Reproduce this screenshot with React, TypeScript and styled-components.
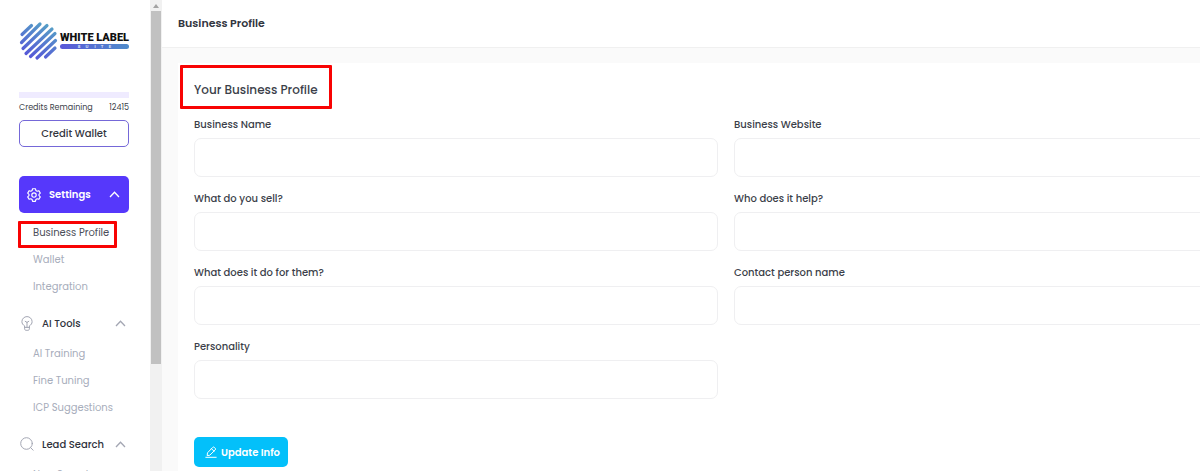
import React, { useId } from "react";
import styled, { createGlobalStyle, css } from "styled-components";

const GlobalStyle = createGlobalStyle`
  *, *::before, *::after { box-sizing: border-box; }
  body {
    margin: 0;
    background: #fafafa;
    color: #3c3f4a;
    font-family: Poppins, Inter, sans-serif;
    font-size: 10px;
    line-height: 15px;
  }
  button, input { font: inherit; color: inherit; }
`;

const Shell = styled.div`
  display: flex;
  height: 100vh;
  overflow: hidden;
`;

const Sidebar = styled.aside`
  flex: none;
  width: 150px;
  height: 100%;
  padding: 21px 21px 0 19px;
  overflow: hidden;
  background: #fff;
`;

const Logo = styled.a`
  display: block;
  height: 39px;
  svg { display: block; overflow: visible; }
`;

const CreditBar = styled.div`
  height: 6px;
  margin-top: 32px;
  background: #efebff;
`;

const CreditLine = styled.div`
  display: flex;
  justify-content: space-between;
  margin-top: 2px;
  font-size: 8px;
`;

const WalletButton = styled.button`
  display: block;
  width: 100%;
  height: 27px;
  margin-top: 5px;
  padding: 0;
  border: 1px solid #7568d8;
  border-radius: 5px;
  background: #fff;
  font-weight: 500;
  color: #33353e;
`;

const Nav = styled.nav`
  display: flex;
  flex-direction: column;
  gap: 12px;
  margin-top: 29px;
`;

const GroupToggle = styled.button<{ $active?: boolean }>`
  display: flex;
  align-items: center;
  gap: 8px;
  width: 100%;
  height: 22px;
  padding: 0 3px 0 1px;
  border: 0;
  background: none;
  color: #2f323c;
  font-weight: 500;
  text-align: left;
  svg { flex: none; color: #a3a6b3; }
  span { flex: 1; }
  ${(p) =>
    p.$active &&
    css`
      height: 37px;
      padding: 0 9px 0 8px;
      border-radius: 5px;
      background: #5638fb;
      color: #fff;
      font-weight: 600;
      svg { color: #fff; }
    `}
`;

const SubList = styled.ul`
  margin: 6px 0 0;
  padding: 0 0 0 14px;
  list-style: none;
`;

const SubItem = styled.li`
  display: flex;
  align-items: center;
  height: 27px;
`;

const SubLink = styled.a<{ $current?: boolean }>`
  position: relative;
  color: ${(p) => (p.$current ? "#4b4e59" : "#a7adbb")};
  text-decoration: none;
  white-space: nowrap;
`;

const Marker = styled.i<{ $inset: string }>`
  position: absolute;
  inset: ${(p) => p.$inset};
  border: 3px solid #f80303;
  border-radius: 1px;
  pointer-events: none;
`;

const ScrollTrack = styled.div`
  display: flex;
  flex-direction: column;
  flex: none;
  width: 12px;
  height: 100%;
  padding: 0 1px;
  background: #f1f1f1;
`;

const ScrollArrow = styled.div`
  display: grid;
  place-items: center;
  height: 11px;
`;

const ScrollThumb = styled.div`
  height: 75%;
  background: #c1c1c1;
`;

const Main = styled.main`
  flex: 1;
  min-width: 0;
  overflow: hidden;
`;

const TopBar = styled.header`
  display: flex;
  align-items: center;
  height: 48px;
  padding: 0 16px;
  border-bottom: 1px solid #f0f0f0;
  background: #fff;
`;

const PageTitle = styled.h1`
  margin: 0;
  font-size: 11px;
  font-weight: 600;
  color: #33363f;
`;

const Card = styled.form`
  min-width: 1096px;
  min-height: calc(100vh - 63px);
  margin: 15px 16px 0;
  padding: 19px 16px 4px;
  background: #fff;
`;

const CardTitle = styled.h2`
  position: relative;
  width: fit-content;
  margin: 0 0 19px;
  font-size: 12px;
  line-height: 16px;
  font-weight: 500;
`;

const FieldGrid = styled.div`
  display: grid;
  grid-template-columns: 1fr 1fr;
  gap: 14px 16px;
`;

const FieldBox = styled.div`
  display: flex;
  flex-direction: column;
  gap: 6px;
  label { font-weight: 500; }
`;

const TextInput = styled.input`
  width: 100%;
  height: 39px;
  padding: 0 12px;
  border: 1px solid #efeff1;
  border-radius: 7px;
  outline: none;
  background: #fff;
`;

const SubmitButton = styled.button`
  display: flex;
  align-items: center;
  justify-content: center;
  gap: 4px;
  height: 30px;
  margin-top: 38px;
  padding: 0 8px 0 11px;
  border: 0;
  border-radius: 5px;
  background: #03c0fa;
  color: #fff;
  font-weight: 600;
`;

const LogoArt = () => (
  <svg width="110" height="39" viewBox="0 0 110 39" role="img" aria-label="White Label Suite">
    <defs>
      <linearGradient id="ball" gradientUnits="userSpaceOnUse" x1="28" y1="3" x2="12" y2="38">
        <stop offset="0" stopColor="#559fc6" />
        <stop offset="1" stopColor="#5654d8" />
      </linearGradient>
      <linearGradient id="strip" x1="0" x2="1">
        <stop offset="0" stopColor="#5a58d8" />
        <stop offset="1" stopColor="#4f8ccb" />
      </linearGradient>
    </defs>
    <g stroke="url(#ball)" strokeWidth="3.200" strokeLinecap="round">
      <path d="M3 13.500 12.500 4.500M2.500 21.500 21 3M4 27.500 28 4.500M7 32.500 33 8M11.500 35.500 36 12.500M18 37 36.500 19.500M26.500 36 36 27" />
    </g>
    <text x="41" y="20" fontFamily="Roboto, sans-serif" fontWeight="900" fontSize="11" fill="#111">WHITE LABEL</text>
    <rect x="41" y="23" width="69" height="5" rx="2.500" fill="url(#strip)" />
    <g fontFamily="Inter, sans-serif" fontWeight="700" fontSize="4" fill="#dfe6fa" textAnchor="middle">
      <text x="60" y="27">S</text>
      <text x="68" y="27">U</text>
      <text x="76" y="27">I</text>
      <text x="83" y="27">T</text>
      <text x="91" y="27">E</text>
    </g>
  </svg>
);

const Chevron = () => (
  <svg width="11" height="7" viewBox="0 0 11 7" fill="none" stroke="currentColor" strokeWidth="1.300">
    <path d="M1 6 5.500 1.300 10 6" />
  </svg>
);

const GearIcon = () => (
  <svg width="14" height="14" viewBox="0 0 14 14" fill="none" stroke="currentColor" strokeWidth="1.150" strokeLinejoin="round">
    <path d="M5.600.700h2.800l.500 1.800 1.200.700 1.800-.500 1.400 2.400L12 6.400v1.200l1.300 1.300-1.400 2.400-1.800-.500-1.200.700-.500 1.800H5.600l-.500-1.800-1.200-.700-1.800.500L.700 8.900 2 7.600V6.400L.700 5.100l1.400-2.400 1.800.500 1.200-.700z" />
    <circle cx="7" cy="7" r="2.200" />
  </svg>
);

const BulbIcon = () => (
  <svg width="14" height="15" viewBox="0 0 14 15" fill="none" stroke="currentColor" strokeWidth="1" strokeLinejoin="round" strokeLinecap="round">
    <path d="M4.600 11V9.800C3 9 1.900 7.500 1.900 5.700a5.100 5.100 0 0 1 10.200 0c0 1.800-1.100 3.300-2.700 4.100V11zM4.600 11v1.800c0 .900.600 1.500 1.500 1.500h1.800c.900 0 1.500-.600 1.500-1.500V11M7 11V6.400M5.200 5.300 7 6.400l1.800-1.100" />
  </svg>
);

const SearchIcon = () => (
  <svg width="14" height="14" viewBox="0 0 14 14" fill="none" stroke="currentColor" strokeWidth="1" strokeLinecap="round">
    <circle cx="6.500" cy="6.500" r="5.800" />
    <path d="m10.700 10.700 2.400 2.500" />
  </svg>
);

const EditIcon = () => (
  <svg width="12" height="12" viewBox="0 0 12 12" fill="none" stroke="currentColor" strokeWidth="1" strokeLinejoin="round" strokeLinecap="round">
    <path d="M2.200 9.200 2.500 6.800 7.600 1.500a1.300 1.300 0 0 1 1.900 0l.600.600a1.300 1.300 0 0 1 0 1.900L5 9zM6.500 2.700 9 5.200M.800 11.300h10.400" />
  </svg>
);

const groups = [
  { name: "Settings", icon: <GearIcon />, active: true, items: ["Business Profile", "Wallet", "Integration"] },
  { name: "AI Tools", icon: <BulbIcon />, items: ["AI Training", "Fine Tuning", "ICP Suggestions"] },
  { name: "Lead Search", icon: <SearchIcon />, items: ["New Search"] },
];

const fields = [
  "Business Name",
  "Business Website",
  "What do you sell?",
  "Who does it help?",
  "What does it do for them?",
  "Contact person name",
  "Personality",
];

const Field = ({ label }: { label: string }) => {
  const id = useId();
  return (
    <FieldBox>
      <label htmlFor={id}>{label}</label>
      <TextInput id={id} type="text" />
    </FieldBox>
  );
};

export default function App() {
  return (
    <>
      <GlobalStyle />
      <Shell>
        <Sidebar>
          <Logo href="#"><LogoArt /></Logo>
          <CreditBar />
          <CreditLine>
            <span>Credits Remaining</span>
            <span>12415</span>
          </CreditLine>
          <WalletButton type="button">Credit Wallet</WalletButton>
          <Nav>
            {groups.map((g) => (
              <div key={g.name}>
                <GroupToggle type="button" $active={g.active} aria-expanded="true">
                  {g.icon}
                  <span>{g.name}</span>
                  <Chevron />
                </GroupToggle>
                <SubList>
                  {g.items.map((item) => {
                    const current = item === "Business Profile";
                    return (
                      <SubItem key={item}>
                        <SubLink href="#" $current={current}>
                          {item}
                          {current && <Marker $inset="-4px -8px -8px -15px" />}
                        </SubLink>
                      </SubItem>
                    );
                  })}
                </SubList>
              </div>
            ))}
          </Nav>
        </Sidebar>
        <ScrollTrack aria-hidden="true">
          <ScrollArrow>
            <svg width="6" height="4" viewBox="0 0 6 4"><path d="M0 4 3 0l3 4z" fill="#a3a3a3" /></svg>
          </ScrollArrow>
          <ScrollThumb />
        </ScrollTrack>
        <Main>
          <TopBar>
            <PageTitle>Business Profile</PageTitle>
          </TopBar>
          <Card>
            <CardTitle>
              Your Business Profile
              <Marker $inset="-17px -14px -11px -14px" />
            </CardTitle>
            <FieldGrid>
              {fields.map((f) => <Field key={f} label={f} />)}
            </FieldGrid>
            <SubmitButton type="button">
              <EditIcon />
              Update Info
            </SubmitButton>
          </Card>
        </Main>
      </Shell>
    </>
  );
}
